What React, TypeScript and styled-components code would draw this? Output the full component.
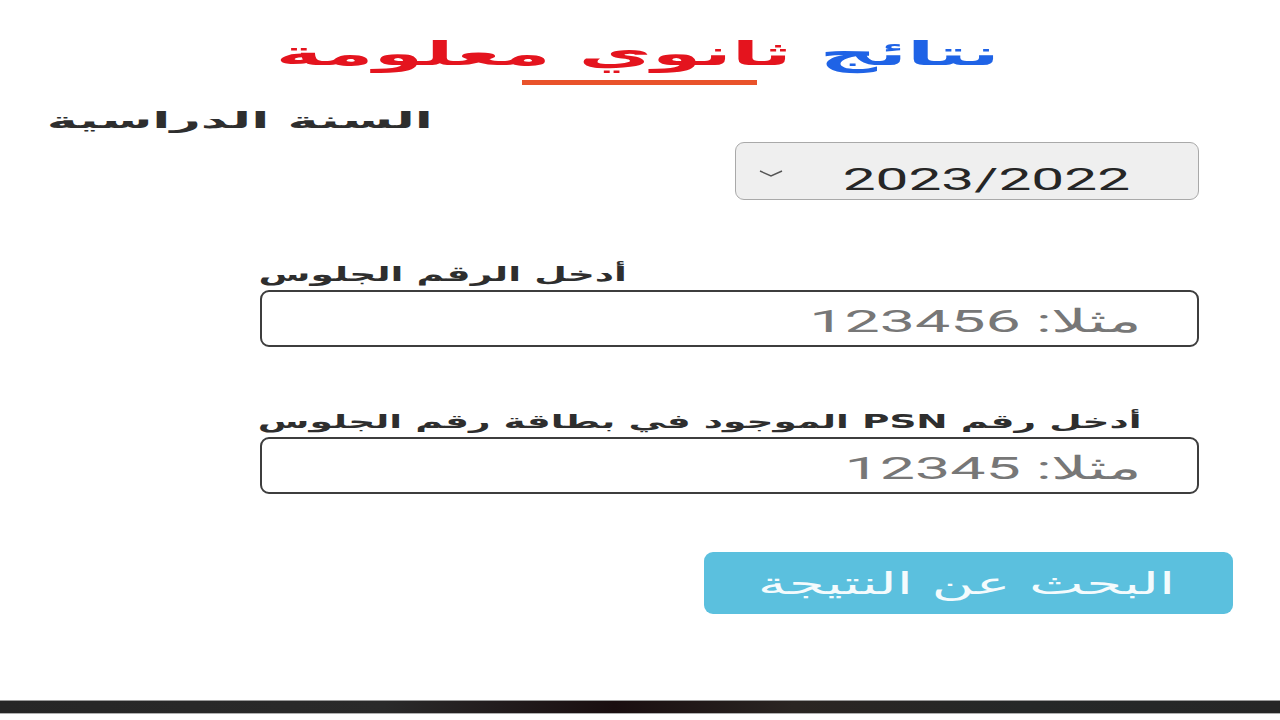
import React from "react";
import styled, { createGlobalStyle } from "styled-components";

const Global = createGlobalStyle`
  html, body { margin: 0; padding: 0; background: #ffffff; }
  body { font-family: "DejaVu Sans", "Noto Sans", sans-serif; }
  * { box-sizing: border-box; }
`;

const Page = styled.main`
  width: 1280px;
  height: 720px;
  display: flex;
  flex-direction: column;
  direction: rtl;
  overflow: hidden;
  background: #fff;
`;

const Stretch = styled.span<{ $sx: number; $origin?: string }>`
  display: inline-block;
  white-space: nowrap;
  transform: scaleX(${(p) => p.$sx});
  transform-origin: ${(p) => p.$origin || "right center"};
`;

const TitleRow = styled.h1`
  margin: 34px 0 0 0;
  height: 40px;
  display: flex;
  justify-content: center;
  align-items: center;
  font-family: "DejaVu Sans", sans-serif;
  font-weight: 700;
  font-size: 33px;
  line-height: 40px;
  padding-right: 4px;
`;

const Blue = styled.span`
  color: #1f63e6;
`;
const Red = styled.span`
  color: #e4141e;
`;

const Underline = styled.div`
  align-self: center;
  width: 235px;
  height: 5px;
  margin-top: 6px;
  margin-right: 2px;
  background: #e9532b;
`;

const Label = styled.label<{ $mr: number; $mt: number; $size: number }>`
  display: block;
  margin-right: ${(p) => p.$mr}px;
  margin-top: ${(p) => p.$mt}px;
  height: 28px;
  line-height: 28px;
  font-family: "DejaVu Sans", sans-serif;
  font-weight: 700;
  font-size: ${(p) => p.$size}px;
  color: #2e2e2e;
`;

const SelectBox = styled.div`
  margin-right: 81px;
  margin-top: 7px;
  width: 464px;
  height: 58px;
  border: 1.5px solid #a9a9a9;
  border-radius: 9px;
  background: #efefef;
  display: flex;
  align-items: center;
  justify-content: space-between;
  padding: 0 68px 0 22px;
`;

const SelectText = styled.span`
  font-family: Roboto, "Liberation Sans", sans-serif;
  font-size: 32px;
  color: #262626;
  direction: ltr;
  line-height: 1;
  padding-top: 16px;
`;

const Chevron = styled.svg`
  width: 26px;
  height: 10px;
  align-self: flex-start;
  margin-top: 26px;
`;

const InputBox = styled.div`
  margin-right: 81px;
  margin-top: 2px;
  width: 939px;
  height: 57px;
  border: 2.5px solid #3d3d3d;
  border-radius: 9px;
  background: #fff;
  display: flex;
  align-items: center;
  padding-right: 55px;
`;

const Placeholder = styled.span`
  font-family: Roboto, "Liberation Sans", sans-serif;
  font-size: 32px;
  color: #777777;
  line-height: 1;
  padding-top: 4px;
`;

const Button = styled.button`
  margin-right: 47px;
  margin-top: 58px;
  width: 529px;
  height: 62px;
  border: none;
  border-radius: 9px;
  background: #5bc0de;
  color: #f4fbfd;
  font-family: "DejaVu Sans", sans-serif;
  font-size: 30px;
  display: flex;
  align-items: center;
  padding: 0 58px 0 0;
  direction: rtl;
  cursor: pointer;
`;

const Spacer = styled.div`
  flex: 1;
`;

const BottomBar = styled.div`
  height: 14px;
  margin-bottom: 6px;
  background: linear-gradient(90deg, #262626 0%, #2a2a2a 30%, #1a0e10 48%, #2a2522 62%, #252828 80%, #262626 100%);
  border-top: 1px solid #9a9a9a;
  border-bottom: 1px solid #b0b0b0;
`;

export default function App() {
  return (
    <>
      <Global />
      <Page>
        <TitleRow>
          <Stretch $sx={2.42} $origin="center">
            <Blue>نتائج</Blue> <Red>ثانوي معلومة</Red>
          </Stretch>
        </TitleRow>
        <Underline />
        <Label $mr={847} $mt={22} $size={22}>
          <Stretch $sx={2.4}>السنة الدراسية</Stretch>
        </Label>
        <SelectBox>
          <SelectText>
            <Stretch $sx={1.83} $origin="right center">2023/2022</Stretch>
          </SelectText>
          <Chevron viewBox="0 0 26 10">
            <path d="M2 2 L13 7 L24 2" fill="none" stroke="#555" strokeWidth="1.4" />
          </Chevron>
        </SelectBox>
        <Label $mr={653} $mt={60} $size={20}>
          <Stretch $sx={1.88}>أدخل الرقم الجلوس</Stretch>
        </Label>
        <InputBox>
          <Placeholder>
            <Stretch $sx={1.96}>مثلا: 123456</Stretch>
          </Placeholder>
        </InputBox>
        <Label $mr={138} $mt={60} $size={19}>
          <Stretch $sx={1.97}>أدخل رقم PSN الموجود في بطاقة رقم الجلوس</Stretch>
        </Label>
        <InputBox>
          <Placeholder>
            <Stretch $sx={1.96}>مثلا: 12345</Stretch>
          </Placeholder>
        </InputBox>
        <Button>
          <Stretch $sx={1.94}>البحث عن النتيجة</Stretch>
        </Button>
        <Spacer />
        <BottomBar />
      </Page>
    </>
  );
}
